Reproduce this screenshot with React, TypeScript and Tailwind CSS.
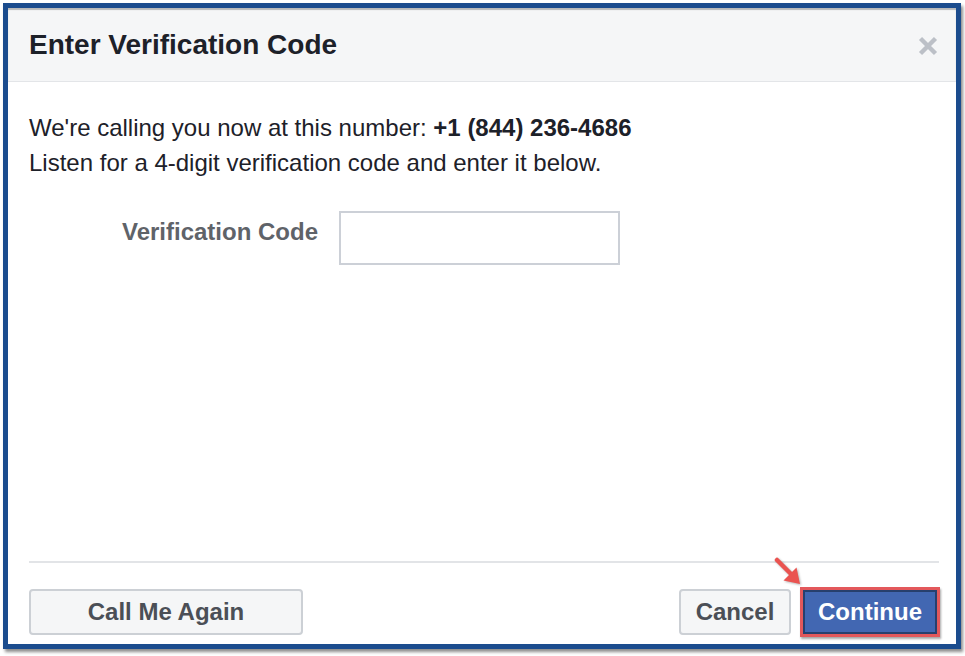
import React from "react";

export default function App() {
  return (
    <div className="w-[965px] h-[656px] bg-white pt-[3px] pl-[3px] font-['Liberation_Sans',Arial,sans-serif]">
      <div className="relative w-[958px] h-[646px] border-[5px] border-[#1b4c8e] bg-white flex flex-col shadow-[2px_3px_3px_rgba(0,0,0,0.45)]">
        {/* header */}
        <div className="h-[74px] bg-[#f5f6f7] border-b border-[#e3e5e8] flex items-center justify-between pl-[21px] pr-[18px] shadow-[inset_0_2px_1px_rgba(0,0,0,0.25)]">
          <h1 className="text-[28px] font-bold text-[#1d2129] leading-none">Enter Verification Code</h1>
          <svg width="20" height="20" viewBox="0 0 20 20" className="mt-[2px]">
            <path d="M2.5 2.5 L17.5 17.5 M17.5 2.5 L2.5 17.5" stroke="#bcc0c7" strokeWidth="4.4" strokeLinecap="butt" />
          </svg>
        </div>

        {/* body */}
        <div className="flex-1 pl-[21px] pr-[17px] pt-[28px]">
          <p className="text-[24px] leading-[35px] text-[#1d2129]">
            We're calling you now at this number: <span className="font-bold">+1 (844) 236-4686</span>
          </p>
          <p className="text-[24px] leading-[35px] text-[#1d2129]">
            Listen for a 4-digit verification code and enter it below.
          </p>
          <div className="flex items-start mt-[31px] -ml-[21px]">
            <label className="w-[310px] text-right text-[24px] leading-[35px] font-bold text-[#5f6369] mt-[3px]">
              Verification Code
            </label>
            <input
              type="text"
              className="ml-[21px] w-[281px] h-[54px] border-2 border-[#ccd0d7] bg-white outline-none"
            />
          </div>
        </div>

        {/* footer */}
        <div className="mx-[21px] mr-[17px] border-t-2 border-[#e2e4e7]" />
        <div className="flex items-center justify-between pl-[21px] pr-[16px] pt-[24px] pb-[7px]">
          <button className="w-[274px] h-[46px] rounded-[4px] border-2 border-[#ccd0d5] bg-[#f5f6f7] text-[24px] font-bold text-[#4b4f56]">
            Call Me Again
          </button>
          <div className="flex items-center gap-[9px]">
            <button className="w-[112px] h-[46px] rounded-[4px] border-2 border-[#ccd0d5] bg-[#f5f6f7] text-[24px] font-bold text-[#4b4f56]">
              Cancel
            </button>
            <div className="border-[3px] border-[#e3585b] shadow-[1px_2px_2px_rgba(0,0,0,0.35)]">
              <button className="w-[134px] h-[44px] border-2 border-[#27406e] bg-[#4267b2] text-[24px] font-bold text-white">
                Continue
              </button>
            </div>
          </div>
        </div>

        {/* annotation arrow */}
        <svg
          className="absolute left-[760px] top-[544px]"
          width="36"
          height="36"
          viewBox="0 0 36 36"
        >
          <g style={{ filter: "drop-shadow(1px 1px 1px rgba(0,0,0,0.3))" }}>
            <line x1="9" y1="8" x2="25" y2="24" stroke="#ea5350" strokeWidth="4.5" strokeLinecap="round" />
            <polygon points="32,32 28.5,15.5 15.5,28.5" fill="#ea5350" />
          </g>
        </svg>
      </div>
    </div>
  );
}
